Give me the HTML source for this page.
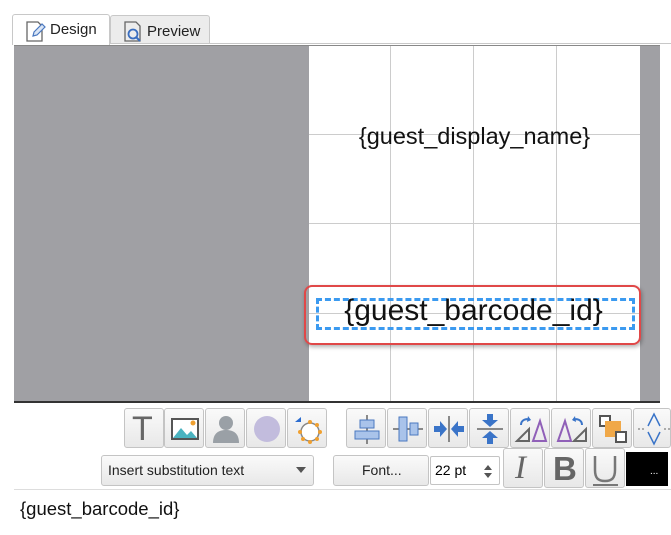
<!DOCTYPE html>
<html><head><meta charset="utf-8"><style>
*{box-sizing:border-box;margin:0;padding:0}
body{width:671px;height:535px;background:#fff;position:relative;overflow:hidden;font-family:"Liberation Sans",sans-serif;}
.a{position:absolute}
.tab{position:absolute;top:14px;height:30px;border:1px solid #c8c8c8;border-bottom:none;border-radius:3px 3px 0 0;font-size:15px;color:#222;}
.btn{position:absolute;top:408px;width:40px;height:40px;border:1px solid #c4c4c4;border-radius:3px;background:linear-gradient(#fafafa,#e8e8e8);}
.b2{position:absolute;top:455px;height:31px;border:1px solid #c4c4c4;border-radius:3px;background:linear-gradient(#fafafa,#e8e8e8);font-size:14px;color:#222;}
.vl{position:absolute;top:46px;width:1px;height:356px;background:#ccc}
.hl{position:absolute;left:309px;width:331px;height:1px;background:#ccc}
svg{position:absolute;left:0;top:0}
</style></head><body>
<div class="tab" style="left:12px;width:98px;background:#fff;z-index:2;height:31px">
 <svg width="30" height="30" style="left:12px;top:5px"><path d="M2 2h11l4 4v15H2z" fill="none" stroke="#666" stroke-width="1.3"/><path d="M8 16l1-4 8-8 3 3-8 8z" fill="#dbe6f5" stroke="#4a78c0" stroke-width="1.2"/></svg>
 <span class="a" style="left:37px;top:6px">Design</span></div>
<div class="tab" style="left:110px;width:100px;background:#ececec;top:15px;height:29px">
 <svg width="30" height="30" style="left:12px;top:4px"><path d="M2 2h11l4 4v15H2z" fill="none" stroke="#666" stroke-width="1.3"/><circle cx="10" cy="14" r="4.5" fill="none" stroke="#3a6ec0" stroke-width="1.8"/><path d="M13 17l4 4" stroke="#3a6ec0" stroke-width="2"/></svg>
 <span class="a" style="left:36px;top:7px">Preview</span></div>
<div class="a" style="left:12px;top:43px;width:659px;height:1px;background:#c8c8c8"></div>
<div class="a" style="left:14px;top:46px;width:295px;height:356px;background:#a0a0a4"></div>
<div class="a" style="left:309px;top:46px;width:331px;height:356px;background:#fff"></div>
<div class="a" style="left:640px;top:46px;width:20px;height:356px;background:#a0a0a4"></div>
<div class="a" style="left:14px;top:45px;width:646px;height:1px;background:#888"></div>
<div class="vl" style="left:390px"></div><div class="vl" style="left:473px"></div><div class="vl" style="left:556px"></div>
<div class="hl" style="top:134px"></div><div class="hl" style="top:223px"></div><div class="hl" style="top:313px"></div>
<div class="a" style="left:309px;top:123px;width:331px;text-align:center;font-size:23.5px;color:#111">{guest_display_name}</div>
<div class="a" style="left:304px;top:285px;width:337px;height:60px;border:2px solid #e04848;border-radius:8px;box-shadow:1px 2px 4px rgba(0,0,0,.3)"></div>
<div class="a" style="left:316px;top:298px;width:319px;height:32px;border:3px dashed #3b9af0"></div>
<div class="a" style="left:305px;top:294px;width:337px;text-align:center;font-size:30px;color:#111">{guest_barcode_id}</div>
<div class="a" style="left:14px;top:401px;width:646px;height:2px;background:#333"></div>
<div class="btn" style="left:124px"><span class="a" style="left:7px;top:1px;font-size:34px;color:#666">T</span></div>
<div class="btn" style="left:164px"><svg width="40" height="40"><rect x="7" y="10" width="26" height="20" fill="#fff" stroke="#555" stroke-width="2"/><path d="M8 29l8-10 6 7 4-4 6 7z" fill="#4ab3c0"/><circle cx="28" cy="14" r="2.5" fill="#f0a030"/></svg></div>
<div class="btn" style="left:205px"><svg width="40" height="40"><circle cx="20" cy="14" r="7" fill="#9aa0a6"/><path d="M7 34c0-10 6-13 13-13s13 3 13 13z" fill="#9aa0a6"/></svg></div>
<div class="btn" style="left:246px"><svg width="40" height="40"><circle cx="20" cy="20" r="13" fill="#c2bcdd"/></svg></div>
<div class="btn" style="left:287px"><svg width="40" height="40"><circle cx="22" cy="23" r="9" fill="#fff" stroke="#888" stroke-width="1.5"/><g fill="#f0a030"><circle cx="22" cy="13" r="2"/><circle cx="32" cy="23" r="2"/><circle cx="22" cy="33" r="2"/><circle cx="12" cy="23" r="2"/><circle cx="29" cy="16" r="2"/><circle cx="29" cy="30" r="2"/><circle cx="15" cy="30" r="2"/></g><path d="M7 13l6-5v5z" fill="#2a6cd0"/></svg></div>
<div class="btn" style="left:346px"><svg width="40" height="40"><path d="M20 6v29" stroke="#666" stroke-width="1.5"/><rect x="13" y="11" width="14" height="8" fill="#a9c3ea" stroke="#4a78c0"/><rect x="8" y="22" width="24" height="8" fill="#a9c3ea" stroke="#4a78c0"/></svg></div>
<div class="btn" style="left:387px"><svg width="40" height="40"><path d="M5 20h30" stroke="#666" stroke-width="1.5"/><rect x="11" y="8" width="8" height="24" fill="#a9c3ea" stroke="#4a78c0"/><rect x="22" y="14" width="8" height="12" fill="#a9c3ea" stroke="#4a78c0"/></svg></div>
<div class="btn" style="left:428px"><svg width="40" height="40"><path d="M20 7v26" stroke="#666" stroke-width="1.5"/><path d="M5 17h6v-5l7 8-7 8v-5H5zM35 17h-6v-5l-7 8 7 8v-5h6z" fill="#3a74c8"/></svg></div>
<div class="btn" style="left:469px"><svg width="40" height="40"><path d="M7 20h26" stroke="#666" stroke-width="1.5"/><path d="M17 5v6h-5l8 7 8-7h-5V5zM17 35v-6h-5l8-7 8 7h-5v6z" fill="#3a74c8"/></svg></div>
<div class="btn" style="left:510px"><svg width="40" height="40"><path d="M6 32l12-12v12z" fill="none" stroke="#666" stroke-width="2"/><path d="M22 32l7-20 6 20z" fill="none" stroke="#9060b8" stroke-width="2"/><path d="M10 16c0-5 5-7 9-5" fill="none" stroke="#3a74c8" stroke-width="2"/><path d="M17 7l3 4-4 2z" fill="#3a74c8"/></svg></div>
<div class="btn" style="left:551px"><svg width="40" height="40"><path d="M6 32l7-20 6 20z" fill="none" stroke="#9060b8" stroke-width="2"/><path d="M22 32l12-12v12z" fill="none" stroke="#666" stroke-width="2"/><path d="M30 16c0-5-5-7-9-5" fill="none" stroke="#3a74c8" stroke-width="2"/><path d="M23 7l-3 4 4 2z" fill="#3a74c8"/></svg></div>
<div class="btn" style="left:592px"><svg width="40" height="40"><rect x="7" y="7" width="10" height="10" fill="#fff" stroke="#555" stroke-width="2"/><rect x="12" y="12" width="16" height="16" fill="#f0a848"/><rect x="23" y="23" width="10" height="10" fill="#fff" stroke="#555" stroke-width="2"/></svg></div>
<div class="btn" style="left:633px;width:38px"><svg width="40" height="40"><path d="M4 20h6M30 20h6" stroke="#666" stroke-dasharray="2 2"/><path d="M14 17l6-12 6 12M14 23l6 12 6-12" fill="none" stroke="#3a74c8" stroke-width="1.5"/></svg></div>
<div class="b2" style="left:101px;width:213px"><span class="a" style="left:6px;top:6px">Insert substitution text</span><span class="a" style="left:194px;top:11px;border:5px solid transparent;border-top:6px solid #555"></span></div>
<div class="b2" style="left:333px;width:96px"><span class="a" style="left:28px;top:6px">Font...</span></div>
<div class="a" style="left:430px;top:456px;width:70px;height:29px;border:1px solid #c4c4c4;border-radius:2px;background:#fff;font-size:14px"><span class="a" style="left:4px;top:5px">22 pt</span><span class="a" style="left:53px;top:4px;border:4px solid transparent;border-bottom:5px solid #555"></span><span class="a" style="left:53px;top:16px;border:4px solid transparent;border-top:5px solid #555"></span></div>
<div class="b2" style="left:503px;top:448px;width:40px;height:40px"><span class="a" style="left:11px;top:1px;font-size:33px;font-style:italic;color:#666;font-family:'Liberation Serif',serif">I</span></div>
<div class="b2" style="left:544px;top:448px;width:40px;height:40px"><span class="a" style="left:8px;top:1px;font-size:33px;font-weight:bold;color:#666">B</span></div>
<div class="b2" style="left:585px;top:448px;width:40px;height:40px"><svg width="40" height="40"><path d="M9 7v14c0 8 3 11 10 11s10-3 10-11V7" fill="none" stroke="#777" stroke-width="2.5"/><path d="M7 36h25" stroke="#777" stroke-width="2"/></svg></div>
<div class="a" style="left:626px;top:452px;width:42px;height:34px;background:#000;color:#fff;font-size:10px"><span class="a" style="left:24px;top:14px">...</span></div>
<div class="a" style="left:14px;top:489px;width:657px;height:1px;background:#ddd"></div>
<div class="a" style="left:20px;top:498px;font-size:18.5px;color:#111">{guest_barcode_id}</div>
</body></html>
